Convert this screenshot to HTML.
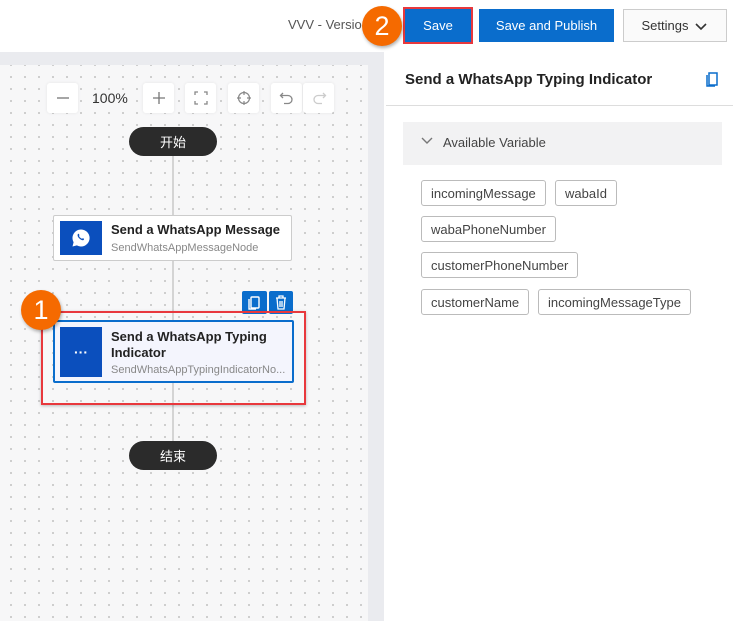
<!DOCTYPE html>
<html><head><meta charset="utf-8"><style>
*{box-sizing:border-box;margin:0;padding:0}
body{width:733px;height:621px;overflow:hidden;background:#fff;font-family:"Liberation Sans","Noto Sans CJK SC",sans-serif;position:relative;color:#222}
.abs{position:absolute}
.band{left:0;top:52px;width:385px;height:569px;background:#eaebef}
.canvas{left:0;top:65px;width:368px;height:556px;background-color:#f7f7f8;background-image:radial-gradient(#b8b8b8 0.8px,transparent 1.1px);background-size:14px 12px;background-position:4px 6px}
.panel{left:384px;top:52px;width:349px;height:569px;background:#fff}
.btn{top:9px;height:33px;font-size:13px;display:flex;align-items:center;justify-content:center}
.tb{top:83px;width:31px;height:30px;background:#fff;border-radius:3px;box-shadow:0 0 3px rgba(0,0,0,.08);display:flex;align-items:center;justify-content:center;color:#888}
.pill{width:88px;height:29px;background:#2b2b2b;border-radius:15px;color:#fff;font-size:13px;display:flex;align-items:center;justify-content:center}
.node{background:#fff;border:1px solid #ccc;border-radius:2px}
.icon{background:#0b4fbd;display:flex;align-items:center;justify-content:center;color:#fff}
.t1{font-size:13px;font-weight:bold;color:#222}
.t2{font-size:11px;color:#888}
.tag{height:26px;border:1px solid #bbb;border-radius:3px;font-size:13px;color:#444;padding:0 9px;display:flex;align-items:center}
.circ{width:40px;height:40px;border-radius:50%;background:#f56a00;color:#fff;font-size:27px;display:flex;align-items:center;justify-content:center;box-shadow:1px 2px 3px rgba(0,0,0,.3)}
</style></head><body>
<div class="abs band"></div>
<div class="abs canvas"></div>
<div class="abs panel"></div>
<div class="abs" style="left:288px;top:17px;font-size:13px;color:#555">VVV - Version</div>
<div class="abs btn" style="left:405px;width:66px;background:#0a6dcc;color:#fff;outline:2px solid #e8383d">Save</div>
<div class="abs btn" style="left:479px;width:135px;background:#0a6dcc;color:#fff">Save and Publish</div>
<div class="abs btn" style="left:623px;width:104px;border:1px solid #ccc;background:#fafafa;color:#333">Settings <svg width="14" height="10" style="margin-left:6px"><path d="M2 3l5 5 5-5" stroke="#333" stroke-width="1.6" fill="none"/></svg></div>
<div class="abs circ" style="left:362px;top:6px">2</div>

<div class="abs tb" style="left:47px"><svg width="14" height="14"><path d="M1 7h12" stroke="#777" stroke-width="1.3"/></svg></div>
<div class="abs" style="left:92px;top:90px;font-size:14px;color:#333">100%</div>
<div class="abs tb" style="left:143px"><svg width="14" height="14"><path d="M1 7h12M7 1v12" stroke="#777" stroke-width="1.3"/></svg></div>
<div class="abs tb" style="left:185px"><svg width="14" height="14"><path d="M1 4V1h3M10 1h3v3M13 10v3h-3M4 13H1v-3" stroke="#888" stroke-width="1.3" fill="none"/></svg></div>
<div class="abs tb" style="left:228px"><svg width="16" height="16"><circle cx="8" cy="8" r="5.5" stroke="#888" stroke-width="1.2" fill="none"/><path d="M8 1v4M8 11v4M1 8h4M11 8h4" stroke="#888" stroke-width="1.2"/></svg></div>
<div class="abs tb" style="left:271px"><svg width="16" height="16"><path d="M4 3L1.5 5.5 4 8M2 5.5h7a4 4 0 010 8H5" stroke="#888" stroke-width="1.3" fill="none"/></svg></div>
<div class="abs tb" style="left:303px"><svg width="16" height="16"><path d="M12 3l2.5 2.5L12 8M14 5.5H7a4 4 0 000 8h4" stroke="#ccc" stroke-width="1.3" fill="none"/></svg></div>

<div class="abs" style="left:172px;top:156px;width:2px;height:286px;background:#d4d4d4"></div>
<div class="abs pill" style="left:129px;top:127px">开始</div>
<div class="abs pill" style="left:129px;top:441px">结束</div>

<div class="abs node" style="left:53px;top:215px;width:239px;height:46px"></div>
<div class="abs icon" style="left:60px;top:221px;width:42px;height:34px"><svg width="20" height="20" viewBox="0 0 20 20"><path d="M10 1.5a8.5 8.5 0 00-7.4 12.7L1.5 18.5l4.4-1.1A8.5 8.5 0 1010 1.5z" fill="#fff"/><path d="M7 6c.5-.5 1 0 1.3.8s-.5 1 0 1.8 1.5 1.7 2.3 2 1-.7 1.6-.3 1.1.8.6 1.4-1.6.9-3.3-.3S6.5 8.6 6.6 7.3 7 6 7 6z" fill="#0b4fbd"/></svg></div>
<div class="abs t1" style="left:111px;top:222px">Send a WhatsApp Message</div>
<div class="abs t2" style="left:111px;top:242px">SendWhatsAppMessageNode</div>

<div class="abs" style="left:242px;top:291px;width:25px;height:23px;background:#0a6dcc;border-radius:2px"><svg width="25" height="23"><rect x="9" y="6" width="8" height="11" stroke="#fff" stroke-width="1.4" fill="none" rx="1"/><path d="M7 8v10h7" stroke="#fff" stroke-width="1.4" fill="none"/></svg></div>
<div class="abs" style="left:269px;top:291px;width:24px;height:23px;background:#0a6dcc;border-radius:2px"><svg width="24" height="23"><path d="M7 7h10M10 7V5h4v2M8 7l1 11h6l1-11M11 10v6M13 10v6" stroke="#fff" stroke-width="1.3" fill="none"/></svg></div>
<div class="abs" style="left:53px;top:320px;width:241px;height:63px;background:#f4f5fd;border:2px solid #0a6dcc;border-radius:2px"></div>
<div class="abs icon" style="left:60px;top:327px;width:42px;height:50px;font-size:14px;font-weight:bold">···</div>
<div class="abs t1" style="left:111px;top:329px;line-height:16px">Send a WhatsApp Typing<br>Indicator</div>
<div class="abs t2" style="left:111px;top:364px">SendWhatsAppTypingIndicatorNo...</div>
<div class="abs" style="left:41px;top:311px;width:265px;height:94px;border:2px solid #e8383d;box-shadow:0 1px 3px rgba(0,0,0,.25)"></div>
<div class="abs circ" style="left:21px;top:290px">1</div>

<div class="abs" style="left:405px;top:71px;font-size:15px;font-weight:bold;color:#222">Send a WhatsApp Typing Indicator</div>
<svg class="abs" style="left:705px;top:72px" width="14" height="16"><rect x="4" y="1" width="8" height="12" stroke="#0a6dcc" stroke-width="1.5" fill="none"/><path d="M2 3v11h8" stroke="#0a6dcc" stroke-width="1.5" fill="none"/></svg>
<div class="abs" style="left:386px;top:105px;width:347px;height:1px;background:#ddd"></div>
<div class="abs" style="left:403px;top:122px;width:319px;height:43px;background:#f2f2f3"></div>
<svg class="abs" style="left:420px;top:136px" width="14" height="10"><path d="M2 2l5 5 5-5" stroke="#777" stroke-width="1.4" fill="none"/></svg>
<div class="abs" style="left:443px;top:135px;font-size:13px;color:#444">Available Variable</div>
<div class="abs tag" style="left:421px;top:180px">incomingMessage</div>
<div class="abs tag" style="left:555px;top:180px">wabaId</div>
<div class="abs tag" style="left:421px;top:216px">wabaPhoneNumber</div>
<div class="abs tag" style="left:421px;top:252px">customerPhoneNumber</div>
<div class="abs tag" style="left:421px;top:289px">customerName</div>
<div class="abs tag" style="left:538px;top:289px">incomingMessageType</div>
</body></html>
